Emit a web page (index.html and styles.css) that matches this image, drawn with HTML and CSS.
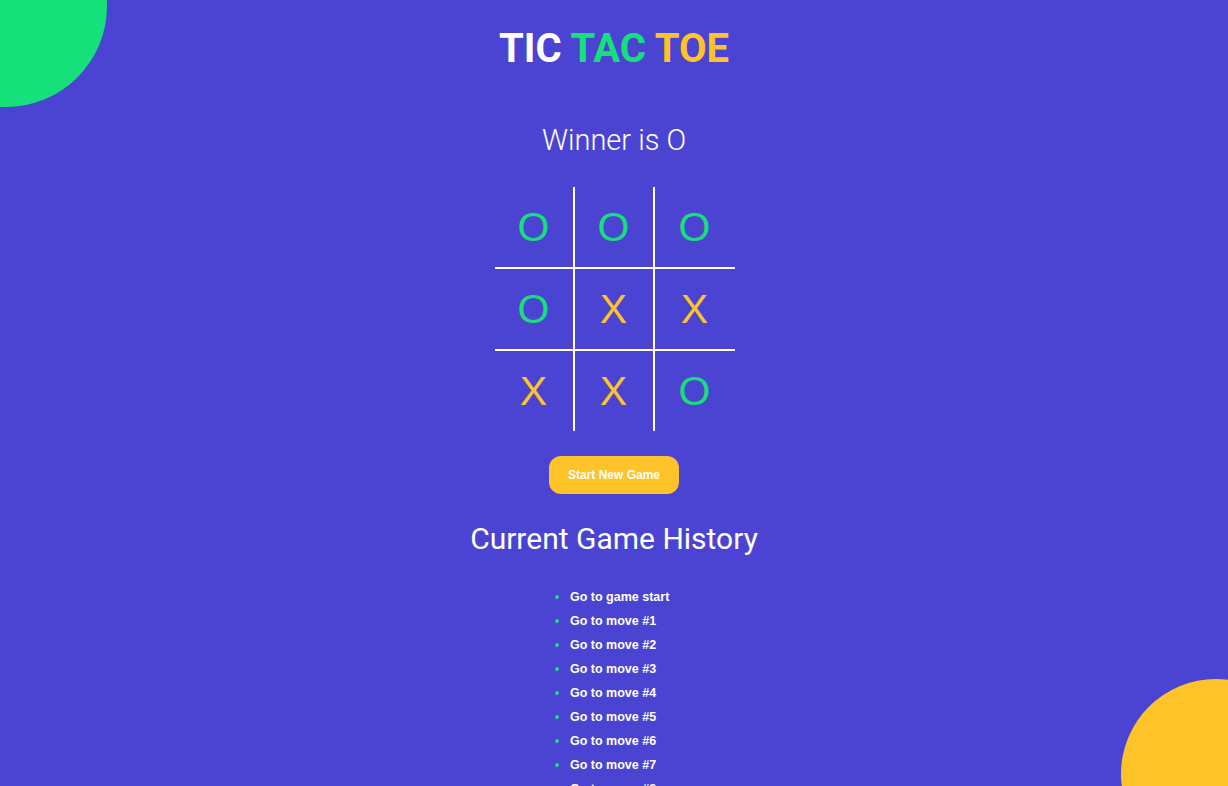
FILE: index.html
```html
<!DOCTYPE html>
<html lang="en">
<head>
<meta charset="utf-8">
<title>Tic Tac Toe</title>
<link rel="stylesheet" href="styles.css">
</head>
<body>
<div class="app">
  <div class="blob blob-green"></div>
  <div class="blob blob-yellow"></div>
  <main class="game">
    <h1 class="title"><span class="t-white">TIC</span> <span class="t-green">TAC</span> <span class="t-yellow">TOE</span></h1>
    <h2 class="status">Winner is O</h2>
    <div class="board">
      <div class="cell o">O</div>
      <div class="cell o">O</div>
      <div class="cell o last-col">O</div>
      <div class="cell o">O</div>
      <div class="cell x">X</div>
      <div class="cell x last-col">X</div>
      <div class="cell x last-row">X</div>
      <div class="cell x last-row">X</div>
      <div class="cell o last-col last-row">O</div>
    </div>
    <button class="new-game">Start New Game</button>
    <h2 class="history-title">Current Game History</h2>
    <ul class="history">
      <li><button class="move">Go to game start</button></li>
      <li><button class="move">Go to move #1</button></li>
      <li><button class="move">Go to move #2</button></li>
      <li><button class="move">Go to move #3</button></li>
      <li><button class="move">Go to move #4</button></li>
      <li><button class="move">Go to move #5</button></li>
      <li><button class="move">Go to move #6</button></li>
      <li><button class="move">Go to move #7</button></li>
      <li><button class="move">Go to move #8</button></li>
      <li><button class="move">Go to move #9</button></li>
    </ul>
  </main>
</div>
</body>
</html>
```
FILE: styles.css
```css
html, body {
  margin: 0;
  padding: 0;
}

body {
  background: #4b44d3;
  font-family: Roboto, "Liberation Sans", Arial, sans-serif;
  color: #ffffff;
}

.app {
  position: relative;
  height: 100vh;
  overflow: hidden;
}

.blob {
  position: absolute;
  border-radius: 50%;
}

.blob-green {
  width: 202px;
  height: 202px;
  left: -95px;
  top: -95px;
  background: #15e07a;
}

.blob-yellow {
  width: 190px;
  height: 190px;
  left: 1121px;
  top: 679px;
  background: #ffc32a;
}

.game {
  display: flex;
  flex-direction: column;
  align-items: center;
  padding-top: 24px;
}

.title {
  margin: 0;
  font-size: 40px;
  line-height: 50px;
  font-weight: 700;
}

.t-white { color: #ffffff; }
.t-green { color: #15e07a; }
.t-yellow { color: #ffc32a; }

.status {
  margin: 48px 0 0;
  font-size: 29px;
  line-height: 36px;
  font-weight: 300;
}

.board {
  margin: 29px 0 0 1px;
  display: grid;
  grid-template-columns: repeat(3, 80px);
  grid-template-rows: 82px 82px 80px;
}

.cell {
  box-sizing: border-box;
  border-right: 2px solid #ffffff;
  border-bottom: 2px solid #ffffff;
  display: flex;
  align-items: center;
  justify-content: center;
  font-family: "Liberation Sans", Arial, sans-serif;
  font-size: 41px;
  font-weight: 400;
}

.cell.last-col { border-right: none; }
.cell.last-row { border-bottom: none; }

.cell.o { color: #15e07a; }
.cell.x { color: #ffc32a; }

.new-game {
  margin-top: 25px;
  height: 38px;
  padding: 0 19px;
  border: none;
  border-radius: 12px;
  background: #ffc32a;
  color: #ffffff;
  font-family: "Liberation Sans", Arial, sans-serif;
  font-size: 12px;
  font-weight: 700;
}

.history-title {
  margin: 27px 0 0;
  font-size: 30px;
  line-height: 36px;
  font-weight: 400;
}

.history {
  margin: 28px 0 0;
  padding-left: 40px;
  width: 128px;
  list-style: disc;
}

.history li {
  height: 24px;
  line-height: 24px;
  color: #15e07a;
  font-size: 13px;
}

.history li::marker {
  color: #15e07a;
}

.move {
  background: none;
  border: none;
  padding: 0;
  color: #ffffff;
  font-family: "Liberation Sans", Arial, sans-serif;
  font-size: 12.5px;
  font-weight: 700;
  line-height: 24px;
}
```
